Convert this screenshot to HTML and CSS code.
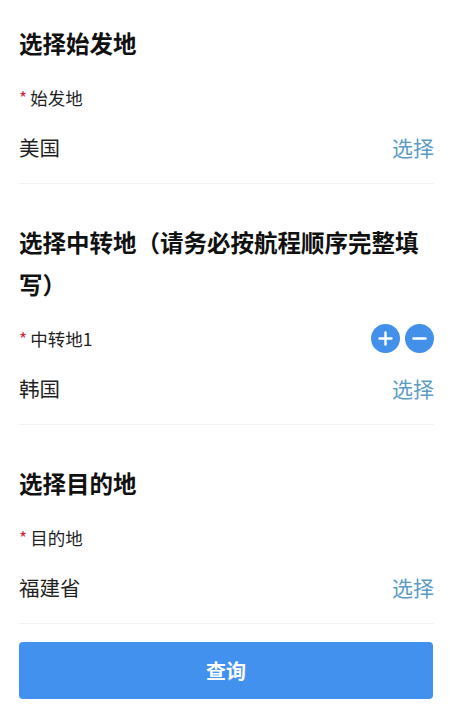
FILE: index.html
```html
<!DOCTYPE html>
<html lang="zh-CN">
<head>
  <meta charset="UTF-8">
  <title>选择地点</title>
  <link rel="stylesheet" href="styles.css">
</head>
<body>
  <section class="block">
    <h2>选择始发地</h2>
    <div class="label-row">
      <label><span class="star">*</span>始发地</label>
    </div>
    <div class="value-row">
      <span>美国</span>
      <a class="pick">选择</a>
    </div>
  </section>

  <section class="block">
    <h2>选择中转地（请务必按航程顺序完整填写）</h2>
    <div class="label-row">
      <label><span class="star">*</span>中转地1</label>
      <div class="actions">
        <button class="round-btn" aria-label="添加">
          <svg viewBox="0 0 29 29" width="29" height="29"><path d="M14.5 8.5v12M8.5 14.5h12" stroke="#fff" stroke-width="2.4" stroke-linecap="round" fill="none"/></svg>
        </button>
        <button class="round-btn" aria-label="删除">
          <svg viewBox="0 0 29 29" width="29" height="29"><path d="M8.5 14.5h12" stroke="#fff" stroke-width="2.4" stroke-linecap="round" fill="none"/></svg>
        </button>
      </div>
    </div>
    <div class="value-row">
      <span>韩国</span>
      <a class="pick">选择</a>
    </div>
  </section>

  <section class="block last">
    <h2>选择目的地</h2>
    <div class="label-row">
      <label><span class="star">*</span>目的地</label>
    </div>
    <div class="value-row">
      <span>福建省</span>
      <a class="pick">选择</a>
    </div>
  </section>

  <button class="submit">查询</button>
</body>
</html>
```

FILE: styles.css
```css
body {
  margin: 0;
  padding: 22px 16px 0 19px;
  height: 704px;
  box-sizing: border-box;
  overflow: hidden;
  background: #fff;
  color: #1f1f1f;
  font-family: "Noto Sans CJK SC", "Liberation Sans", sans-serif;
}

h2 {
  margin: 0;
  font-size: 23.5px;
  line-height: 42px;
  font-weight: 700;
  color: #111;
}

.block {
  border-bottom: 1px solid #f3f3f3;
  margin-bottom: 37px;
  padding-bottom: 21px;
}

.block.last {
  margin-bottom: 18px;
}

.label-row {
  display: flex;
  justify-content: space-between;
  align-items: center;
  height: 30px;
  margin-top: 18px;
  font-size: 17.5px;
}

.star {
  color: #c8283c;
  margin-right: 3px;
}

.value-row {
  display: flex;
  justify-content: space-between;
  align-items: center;
  height: 30px;
  margin-top: 20px;
  font-size: 20.5px;
}

.pick {
  font-size: 21px;
  color: #5b9cc4;
}

.actions {
  display: flex;
  gap: 5px;
}

.round-btn {
  width: 29px;
  height: 29px;
  padding: 0;
  border: none;
  border-radius: 50%;
  background: #4390ea;
}

.round-btn svg {
  display: block;
}

.submit {
  display: block;
  width: 414px;
  height: 57px;
  border: none;
  border-radius: 4px;
  background: #4391ee;
  color: #fff;
  font-family: inherit;
  font-size: 20px;
  font-weight: 700;
}
```
